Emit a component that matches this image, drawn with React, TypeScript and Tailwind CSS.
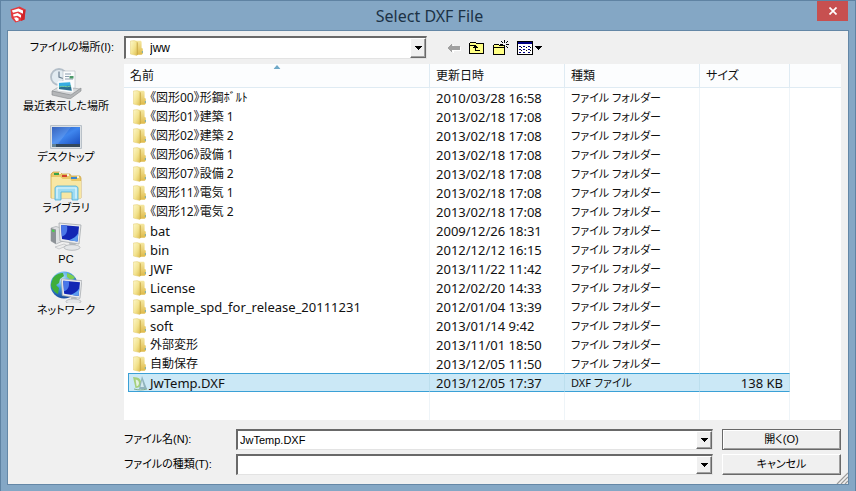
import { useState } from 'react';
import type { ReactNode } from 'react';

type FileRow = {
    name: string;
    date: string;
    type: string;
    size?: string;
};

const FOLDER = 'ファイル フォルダー';

const files: FileRow[] = [
    { name: '《図形00》形鋼ﾎﾞﾙﾄ', date: '2010/03/28 16:58', type: FOLDER },
    { name: '《図形01》建築 1', date: '2013/02/18 17:08', type: FOLDER },
    { name: '《図形02》建築 2', date: '2013/02/18 17:08', type: FOLDER },
    { name: '《図形06》設備 1', date: '2013/02/18 17:08', type: FOLDER },
    { name: '《図形07》設備 2', date: '2013/02/18 17:08', type: FOLDER },
    { name: '《図形11》電気 1', date: '2013/02/18 17:08', type: FOLDER },
    { name: '《図形12》電気 2', date: '2013/02/18 17:08', type: FOLDER },
    { name: 'bat', date: '2009/12/26 18:31', type: FOLDER },
    { name: 'bin', date: '2012/12/12 16:15', type: FOLDER },
    { name: 'JWF', date: '2013/11/22 11:42', type: FOLDER },
    { name: 'License', date: '2012/02/20 14:33', type: FOLDER },
    { name: 'sample_spd_for_release_20111231', date: '2012/01/04 13:39', type: FOLDER },
    { name: 'soft', date: '2013/01/14 9:42', type: FOLDER },
    { name: '外部変形', date: '2013/11/01 18:50', type: FOLDER },
    { name: '自動保存', date: '2013/12/05 11:50', type: FOLDER },
    { name: 'JwTemp.DXF', date: '2013/12/05 17:37', type: 'DXF ファイル', size: '138 KB' },
];

const isLatin = (text: string) => /^[\x20-\x7e]+$/.test(text);

const FolderIcon = () => (
    <svg viewBox="0 0 14 16" className="w-3.5 h-4 shrink-0" aria-hidden="true">
        <defs>
            <linearGradient id="folderFront" x1="0" y1="0" x2="1" y2="1">
                <stop offset="0" stopColor="#fcf7c9" />
                <stop offset="0.55" stopColor="#f3e38f" />
                <stop offset="1" stopColor="#dfbf50" />
            </linearGradient>
            <linearGradient id="folderBack" x1="0" y1="0" x2="0" y2="1">
                <stop offset="0" stopColor="#f5e8a2" />
                <stop offset="1" stopColor="#dfba49" />
            </linearGradient>
        </defs>
        <path d="M5 .8h5.800l.8.9V8l1.200.6v5.200l-1.200.9H6z" fill="url(#folderBack)" />
        <path d="M.4 1l4-.4L7 2v13.500L.4 14z" fill="url(#folderFront)" stroke="#e2ca70" strokeWidth=".5" />
        <path d="M7.300 2.400v12.600" stroke="#c4a240" strokeWidth=".8" />
        <path d="M12.400 11v2" stroke="#6fa9b0" strokeWidth=".9" />
    </svg>
);

const DxfIcon = () => (
    <svg viewBox="0 0 14 16" className="w-3.5 h-4 shrink-0" aria-hidden="true">
        <path d="M0 2l4 .6c3 .8 4.400 3 4.200 6C8 11.500 6 13.300 2.500 13z" fill="#a5cf7c" />
        <path d="M2.600 4.600c2.400.2 3.400 1.900 3.300 3.900-.1 1.600-1 2.600-2.300 2.700z" fill="#e3f2e2" />
        <path d="M9 1l5 13H6z" fill="#8fb3bd" />
        <path d="M9 5l2 7H7.500z" fill="#d3e9ee" />
        <path d="M1 14c4 1.200 9 1.200 13 0" fill="none" stroke="#7fae8d" strokeWidth="1" />
    </svg>
);

const SketchUpLogo = () => (
    <svg viewBox="0 0 16 17" className="w-4 h-[17px]" aria-hidden="true">
        <path d="M.5 3.500L9.500.5l6 3-1 10L5.500 16.500 1.500 12z" fill="#e5383c" />
        <path d="M12 5l3.500-1.500-1 10L11 15z" fill="#cf2429" />
        <path d="M1.800 4.600L8.500 2.400l4.500 2.200v3.200L8.300 5.400 3 6.800z" fill="#fff" />
        <path d="M3 8.400l4.600-1.300 3.400 1.900v2.700L7.400 9.800 3.600 10.600z" fill="#fff" />
        <path d="M4 11.800l2.600-.6 2 1.200v2.200l-2.400.6z" fill="#fff" />
    </svg>
);

const RecentIcon = () => (
    <svg viewBox="0 0 32 32" className="w-8 h-8" aria-hidden="true">
        <path d="M2 24l8-5 20 3-8 7z" fill="#d6d8da" stroke="#9a9da0" strokeWidth=".6" />
        <path d="M2 24v4l18 4 11-8v-3l-10 7z" fill="#b4b6b8" stroke="#85888b" strokeWidth=".6" />
        <circle cx="9" cy="10" r="8" fill="#e2ebf1" stroke="#b3bec8" strokeWidth="1.800" />
        <path d="M9 4.500V10l4 1.500" fill="none" stroke="#6b7e90" strokeWidth="1.200" />
        <path d="M13 4h12v17H13z" fill="#fbfcfd" stroke="#b3bbc2" strokeWidth=".6" />
        <path d="M15 7h6M15 9.500h4M15 12h8" stroke="#7e93a6" strokeWidth=".9" />
        <path d="M19.500 9h4v2.500h-4z" fill="#4c9a68" />
        <path d="M8 15l13-1 2 11-15-2z" fill="#dff2fa" stroke="#fff" />
        <path d="M9 16l11-.8.8 4L9 20z" fill="#36aee2" />
        <path d="M9 19.500l11.800-1 1 5.300L9 22z" fill="#2b6f91" />
        <path d="M9 20c4-2 7 1 12-1" fill="none" stroke="#74cfa0" />
    </svg>
);

const DesktopIcon = () => (
    <svg viewBox="0 0 32 32" className="w-8 h-8" aria-hidden="true">
        <defs>
            <linearGradient id="desk" x1="0" y1="0" x2="1" y2="1">
                <stop offset="0" stopColor="#1d4fb4" />
                <stop offset="0.5" stopColor="#3f86ee" />
                <stop offset="1" stopColor="#1a4fc0" />
            </linearGradient>
        </defs>
        <path d="M.5 7.500h31v23H.5z" fill="#dbe0e4" stroke="#b9c1c8" />
        <path d="M2 9h28v17H2z" fill="url(#desk)" />
        <path d="M2 9h19L8 26H2z" fill="#fff" opacity=".12" />
        <path d="M2 26h28v3H2z" fill="#33485c" />
        <path d="M2 26h4v3H2z" fill="#5f8197" />
    </svg>
);

const LibraryIcon = () => (
    <svg viewBox="0 0 32 32" className="w-8 h-8" aria-hidden="true">
        <path d="M1 5l2-2h7l2 2h8l1 2h9l1 2v20H1z" fill="#e9c869" stroke="#c79f3b" strokeWidth=".7" />
        <path d="M1.500 8h9l2 2h8l1 2h9.500v17H1.500z" fill="#f8e7a4" />
        <path d="M4 4h5v2H4z" fill="#37a24a" />
        <path d="M12 6h5v2h-5z" fill="#d2422f" />
        <path d="M21 8h6v2h-6z" fill="#3b86cf" />
        <path d="M9 4h2M17 6h2M27 8h2" stroke="#fff" strokeWidth="1.500" />
        <path d="M5 31V18.500L7 17h19l2 1.500V31h-6v-8H11v8z" fill="#9fdcf3" stroke="#4faed6" strokeWidth=".8" />
        <path d="M7 29.500V19h19v10.500" fill="none" stroke="#e3f8ff" strokeWidth="1.200" />
    </svg>
);

const Monitor = () => (
    <>
        <path d="M19 23l6-1 1 4h-6z" fill="#b9bec3" />
        <ellipse cx="22" cy="27.500" rx="8" ry="2.800" fill="#e4e6e8" stroke="#a5a9ad" strokeWidth=".7" />
        <path d="M9 3l22 2-2 19-19-3z" fill="#e9ebed" stroke="#a5a9ad" strokeWidth=".8" />
        <path d="M11 5l18 1.600-1.500 15L12 19z" fill="#1226b4" />
        <path d="M11 5l6 .5c1 6-1 10-5.200 11z" fill="#4a77e8" />
        <path d="M19 20.200l8.500 1.400 1-9c-2 4-5 6-9.500 7.600z" fill="#5c9df0" />
    </>
);

const PcIcon = () => (
    <svg viewBox="0 0 32 32" className="w-8 h-8" aria-hidden="true">
        <path d="M1 8l5-1.500 7 2V21l-7 3-5-3z" fill="#dfe1e3" stroke="#a5a9ad" strokeWidth=".7" />
        <path d="M1 8l5 1.500V24l-5-3z" fill="#8c9196" />
        <path d="M2 9.500l2.500.8v2L2 11.500z" fill="#43d445" />
        <path d="M5 27l9-3 3 1.500-8 3.500z" fill="#eceded" stroke="#b1b4b7" strokeWidth=".6" />
        <Monitor />
    </svg>
);

const NetworkIcon = () => (
    <svg viewBox="0 0 32 32" className="w-8 h-8" aria-hidden="true">
        <defs>
            <radialGradient id="globe" cx="0.4" cy="0.25" r="0.8">
                <stop offset="0" stopColor="#c4ecff" />
                <stop offset="0.45" stopColor="#3f9be0" />
                <stop offset="1" stopColor="#123f94" />
            </radialGradient>
        </defs>
        <circle cx="14" cy="14" r="13.500" fill="url(#globe)" />
        <path d="M3 7c3-4 7-5 10-5l1 3-4 3-1 4-3 2 3 3-1 6c-4-2-7-6-7-10z" fill="#3fae3a" />
        <path d="M17 2c4 1 7 3 8 5l-4 2-4-3z" fill="#7ecf50" />
        <g transform="translate(3 5) scale(.93)">
            <Monitor />
        </g>
    </svg>
);

const Caret = () => (
    <svg viewBox="0 0 7 4" className="w-[7px] h-1" shapeRendering="crispEdges" aria-hidden="true">
        <path d="M0 0h7L3.500 4z" fill="#000" />
    </svg>
);

const DropFace = () => (
    <span className="flex h-full w-4 items-center justify-center bg-[#f0f0f0] border border-t-white border-l-white border-r-[#696969] border-b-[#696969] shadow-[inset_-1px_-1px_0_#a0a0a0]">
        <Caret />
    </span>
);

const sunken =
    'flex bg-white border-t-2 border-l-2 border-r border-b border-t-[#696969] border-l-[#696969] border-r-[#e3e3e3] border-b-[#e3e3e3]';

const places: { label: string; icon: ReactNode }[] = [
    { label: '最近表示した場所', icon: <RecentIcon /> },
    { label: 'デスクトップ', icon: <DesktopIcon /> },
    { label: 'ライブラリ', icon: <LibraryIcon /> },
    { label: 'PC', icon: <PcIcon /> },
    { label: 'ネットワーク', icon: <NetworkIcon /> },
];

const TitleBar = () => (
    <header className="flex h-[30px] items-start justify-between pl-0.5">
        <div className="w-8 pt-[5px]">
            <SketchUpLogo />
        </div>
        <h1 className="pt-[3px] text-base leading-6 text-[#1c3246] font-['Noto_Sans',sans-serif]">Select DXF File</h1>
        <button
            aria-label="閉じる"
            className="flex h-5 w-[31px] items-center justify-center bg-[#c75050] text-white"
        >
            <svg viewBox="0 0 8 8" className="w-2 h-2" aria-hidden="true">
                <path d="M.5.5l7 7m0-7l-7 7" stroke="currentColor" strokeWidth="1.700" />
            </svg>
        </button>
    </header>
);

const Toolbar = () => (
    <div className="flex items-center gap-2">
        <button aria-label="戻る">
            <svg viewBox="0 0 14 12" className="w-3.5 h-3" shapeRendering="crispEdges" aria-hidden="true">
                <path d="M1 6l5-5v3h7v4H6v3z" fill="#fff" transform="translate(1 1)" />
                <path d="M0 6l5-5v3h8v4H5v3z" fill="#a0a0a0" />
            </svg>
        </button>
        <button aria-label="上のフォルダーへ">
            <svg viewBox="0 0 16 14" className="w-4 h-3.5" shapeRendering="crispEdges" aria-hidden="true">
                <path d="M.5 12.500v-10l1-1h5l1 1h7v10z" fill="#ffff84" stroke="#000" />
                <path d="M1 4.500h6" stroke="#000" />
                <path d="M6 4h1v1h1v1h1v1H7v2h4v1H6V7H4V6h1V5h1z" fill="#000" />
            </svg>
        </button>
        <button aria-label="新しいフォルダー">
            <svg viewBox="0 0 16 16" className="w-4 h-4" shapeRendering="crispEdges" aria-hidden="true">
                <path d="M.5 14.500v-9l1-1h4l1 1h5v9z" fill="#ffff84" stroke="#000" />
                <path d="M1 7.500h10" stroke="#000" />
                <path
                    d="M11 0h1v3h-1zM11 6h1v3h-1zM7 4h3v1H7zM13 4h3v1h-3zM8 1h1v1H8zM9 2h1v1H9zM14 1h1v1h-1zM13 2h1v1h-1zM13 6h1v1h-1zM14 7h1v1h-1z"
                    fill="#000"
                />
            </svg>
        </button>
        <button aria-label="表示" className="flex items-center">
            <svg viewBox="0 0 16 14" className="w-4 h-3.5" shapeRendering="crispEdges" aria-hidden="true">
                <path d="M.5.5h15v13H.5z" fill="#fff" stroke="#000" />
                <path d="M1 1h14v2H1z" fill="#000084" />
                <path
                    d="M2 5h2v1H2zM6 5h2v1H6zM11 5h2v1h-2zM2 8h2v1H2zM6 8h2v1H6zM11 8h2v1h-2zM2 11h2v1H2zM6 11h2v1H6zM11 11h2v1h-2z"
                    fill="#000084"
                />
                <path d="M4 6h1v1H4zM9 6h1v1H9zM13 6h1v1h-1zM4 9h1v1H4zM9 9h1v1H9zM13 9h1v1h-1z" fill="#000" />
            </svg>
            <span className="pl-0.5">
                <Caret />
            </span>
        </button>
    </div>
);

const headCell = 'h-6 border-b border-r border-[#dfebf3] bg-[#fcfdfe] pl-1.5 text-left font-normal';

const FileTable = () => {
    const [selected, setSelected] = useState('JwTemp.DXF');
    return (
        <div className="bg-white font-['Noto_Sans','Noto_Sans_CJK_JP',sans-serif] text-xs text-[#111]">
            <table className="w-full table-fixed border-separate border-spacing-0">
                <colgroup>
                    <col className="w-1" />
                    <col className="w-[302px]" />
                    <col className="w-[135px]" />
                    <col className="w-[135px]" />
                    <col className="w-[90px]" />
                    <col />
                </colgroup>
                <thead>
                    <tr>
                        <th colSpan={2} aria-sort="ascending" className={`${headCell} relative`}>
                            名前
                            <svg
                                viewBox="0 0 7 4"
                                className="absolute left-1/2 top-px w-[7px] h-1 -translate-x-1/2"
                                aria-hidden="true"
                            >
                                <path d="M0 4l3.500-4L7 4z" fill="#6fa9c8" />
                            </svg>
                        </th>
                        <th className={headCell}>更新日時</th>
                        <th className={headCell}>種類</th>
                        <th className={`${headCell} [font-feature-settings:'palt']`}>サイズ</th>
                        <td className="border-b border-[#dfebf3] bg-[#fcfdfe]" />
                    </tr>
                </thead>
                <tbody>
                    {files.map((file) => {
                        const active = file.name === selected;
                        const cell = active
                            ? 'h-[19px] border-y border-y-[#3aa0d6] border-r border-r-[#bcdfee] bg-[#cbe8f6]'
                            : 'h-[19px] border-r border-[#eef4f8]';
                        return (
                            <tr key={file.name} onClick={() => setSelected(file.name)} className="leading-4">
                                <td />
                                <td className={`${cell} ${active ? 'border-l border-l-[#3aa0d6] pl-1' : 'pl-[5px]'}`}>
                                    <div className="flex h-[17px] items-center gap-[3px] whitespace-nowrap">
                                        {file.size ? <DxfIcon /> : <FolderIcon />}
                                        <span
                                            className={
                                                isLatin(file.name) ? 'text-[13px]' : "text-xs [font-feature-settings:'palt']"
                                            }
                                        >
                                            {file.name}
                                        </span>
                                    </div>
                                </td>
                                <td className={`${cell} pl-1.5 text-[13px]`}>{file.date}</td>
                                <td className={`${cell} pl-1.5 text-[11px] [font-feature-settings:'palt']`}>{file.type}</td>
                                <td
                                    className={`${cell} pr-1.5 text-right text-[13px] ${active ? 'border-r-[#3aa0d6]' : ''}`}
                                >
                                    {file.size}
                                </td>
                                <td />
                            </tr>
                        );
                    })}
                    <tr aria-hidden="true">
                        <td className="h-7" />
                        <td className="border-r border-[#eef4f8]" />
                        <td className="border-r border-[#eef4f8]" />
                        <td className="border-r border-[#eef4f8]" />
                        <td className="border-r border-[#eef4f8]" />
                        <td />
                    </tr>
                </tbody>
            </table>
        </div>
    );
};

const FileForm = () => {
    const [fileName, setFileName] = useState('JwTemp.DXF');
    return (
        <form
            onSubmit={(e) => e.preventDefault()}
            className="grid grid-cols-[103px_1fr_119px] gap-x-[9px] gap-y-1 items-center"
        >
            <label htmlFor="file-name">ファイル名(N):</label>
            <div className={`${sunken} h-[21px]`}>
                <input
                    id="file-name"
                    type="text"
                    value={fileName}
                    onChange={(e) => setFileName(e.target.value)}
                    className="min-w-0 flex-1 pl-0.5 outline-none"
                />
                <button type="button" aria-label="ファイル名の一覧">
                    <DropFace />
                </button>
            </div>
            <button
                type="submit"
                className="h-[21px] border border-[#696969] bg-[#f0f0f0] shadow-[inset_1px_1px_0_#fff,inset_-1px_-1px_0_#a0a0a0]"
            >
                開く(O)
            </button>
            <label htmlFor="file-type">ファイルの種類(T):</label>
            <div className={`${sunken} h-[21px]`}>
                <select id="file-type" className="min-w-0 flex-1 appearance-none pl-0.5 outline-none">
                    <option></option>
                </select>
                <span className="pointer-events-none">
                    <DropFace />
                </span>
            </div>
            <button
                type="button"
                className="h-[21px] border border-t-white border-l-white border-r-[#696969] border-b-[#696969] bg-[#f0f0f0] shadow-[inset_-1px_-1px_0_#a0a0a0]"
            >
                キャンセル
            </button>
        </form>
    );
};

const App = () => {
    return (
        <div className="flex min-h-screen flex-col border border-[#5f83a3] bg-[#84a7c5] px-[7px] pb-[7px] font-['Liberation_Sans','Noto_Sans_CJK_JP',sans-serif] text-[11px] text-black">
            <TitleBar />
            <main className="relative grid flex-1 grid-cols-[116px_1fr] content-start bg-[#f0f0f0] pr-[7px] outline outline-[#6487a6] [font-feature-settings:'palt']">
                <label htmlFor="look-in" className="self-center whitespace-nowrap pr-2.5 text-right">
                    ファイルの場所(I):
                </label>
                <div className="flex h-[33px] items-center gap-5">
                    <div className={`${sunken} h-[23px] w-[303px] items-center pl-1`}>
                        <FolderIcon />
                        <select id="look-in" className="h-full min-w-0 flex-1 appearance-none pl-1.5 text-xs outline-none">
                            <option>jww</option>
                        </select>
                        <span className="pointer-events-none h-full">
                            <DropFace />
                        </span>
                    </div>
                    <Toolbar />
                </div>
                <nav className="flex flex-col items-center gap-[5px] pt-[3px]">
                    {places.map((place) => (
                        <button key={place.label} className="flex flex-col items-center whitespace-nowrap leading-[14px]">
                            {place.icon}
                            {place.label}
                        </button>
                    ))}
                </nav>
                <FileTable />
                <div className="col-start-2 py-[9px]">
                    <FileForm />
                </div>
                <svg viewBox="0 0 12 12" className="absolute bottom-0 right-0 w-3 h-3" aria-hidden="true">
                    <path d="M1 12L12 1M5 12l7-7M9 12l3-3" stroke="#9a9a9a" strokeWidth="1.200" />
                </svg>
            </main>
        </div>
    );
};

export default App;
